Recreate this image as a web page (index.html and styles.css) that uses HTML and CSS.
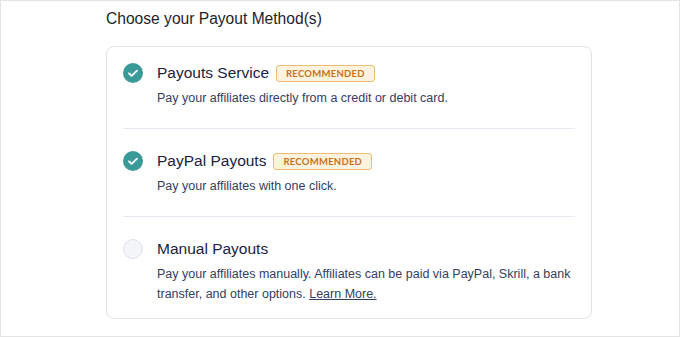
FILE: index.html
```html
<!DOCTYPE html>
<html lang="en">
<head>
<meta charset="utf-8">
<title>Payout Methods</title>
<link rel="stylesheet" href="styles.css">
</head>
<body>
<div class="frame">
  <div class="content">
    <h2 class="heading">Choose your Payout Method(s)</h2>
    <div class="card">
      <div class="row">
        <span class="check on">
          <svg viewBox="0 0 20 20" width="20" height="20"><circle cx="10" cy="10" r="10" fill="#3a9a97"/><path d="M6 10.3l2.6 2.6L14 7.6" fill="none" stroke="#fff" stroke-width="1.8" stroke-linecap="round" stroke-linejoin="round"/></svg>
        </span>
        <div class="body">
          <div class="title-line"><span class="title">Payouts Service</span><span class="badge">RECOMMENDED</span></div>
          <p class="desc">Pay your affiliates directly from a credit or debit card.</p>
        </div>
      </div>
      <div class="row">
        <span class="check on">
          <svg viewBox="0 0 20 20" width="20" height="20"><circle cx="10" cy="10" r="10" fill="#3a9a97"/><path d="M6 10.3l2.6 2.6L14 7.6" fill="none" stroke="#fff" stroke-width="1.8" stroke-linecap="round" stroke-linejoin="round"/></svg>
        </span>
        <div class="body">
          <div class="title-line"><span class="title">PayPal Payouts</span><span class="badge">RECOMMENDED</span></div>
          <p class="desc">Pay your affiliates with one click.</p>
        </div>
      </div>
      <div class="row">
        <span class="check off"></span>
        <div class="body">
          <div class="title-line"><span class="title">Manual Payouts</span></div>
          <p class="desc">Pay your affiliates manually. Affiliates can be paid via PayPal, Skrill, a bank transfer, and other options. <a class="link" href="#">Learn More.</a></p>
        </div>
      </div>
    </div>
  </div>
</div>
</body>
</html>
```

FILE: styles.css
```css
* { box-sizing: border-box; }
html, body { margin: 0; padding: 0; background: #fff; }
body { font-family: "Liberation Sans", Arial, sans-serif; }
.frame {
  width: 680px;
  height: 337px;
  border: 1px solid #e4e4e4;
  background: #fff;
  padding: 0 0 0 105px;
}
.content { width: 486px; }
.heading {
  margin: 8px 0 17px 0;
  font-size: 15.6px;
  line-height: 20px;
  font-weight: 400;
  color: #1f222c;
}
.card {
  border: 1px solid #dfe2e9;
  border-radius: 8px;
  padding: 16px 16px 14px;
}
.row {
  display: flex;
  gap: 14px;
  padding: 22px 0 20px;
}
.row + .row { border-top: 1px solid #e4ebf3; }
.row:first-child { padding-top: 0; }
.row:last-child { padding-bottom: 0; }
.check {
  flex: none;
  width: 20px;
  height: 20px;
  display: block;
}
.check svg { display: block; }
.check.off {
  border-radius: 50%;
  background: #f4f5f9;
  border: 1px solid #dde1ea;
}
.body { flex: 1; min-width: 0; }
.title-line {
  display: flex;
  align-items: center;
  gap: 7px;
  height: 20px;
}
.title {
  font-size: 15.5px;
  line-height: 20px;
  color: #1b223d;
}
.badge {
  font-family: Lato, "Liberation Sans", sans-serif;
  font-weight: 700;
  font-size: 9.5px;
  letter-spacing: 0.25px;
  line-height: 15px;
  color: #c8721c;
  background: #fdf3de;
  border: 1px solid #edbd76;
  border-radius: 3px;
  padding: 0 9px;
  margin-top: 1px;
}
.desc {
  margin: 5px 0 0;
  font-size: 12.5px;
  line-height: 20px;
  color: #34405f;
}
.link { color: #34405f; text-decoration: underline; }
```
